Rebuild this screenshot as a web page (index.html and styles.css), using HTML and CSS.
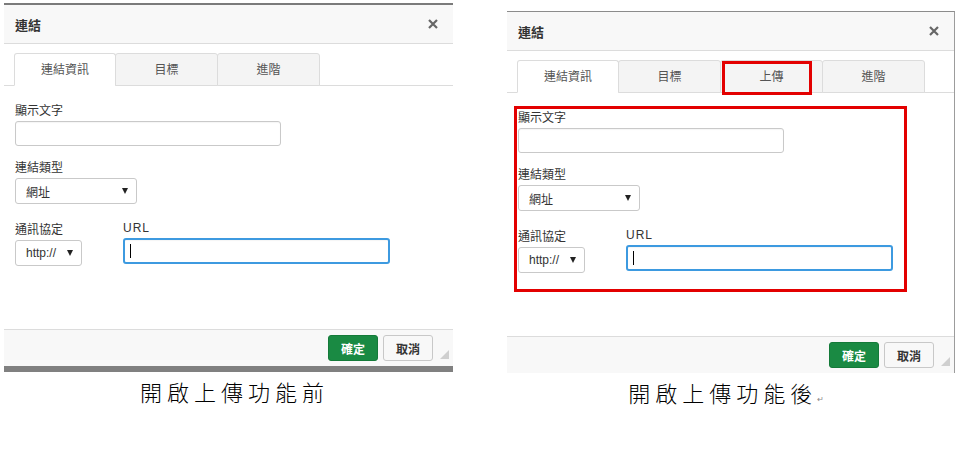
FILE: index.html
```html
<!DOCTYPE html>
<html lang="zh-Hant">
  <head>
    <meta charset="UTF-8" />
    <meta name="viewport" content="width=device-width, initial-scale=1.0" />
    <title>連結</title>
    <link rel="stylesheet" href="styles.css">
  </head>
  <body>
    <div class="page">
      <!-- before -->
      <div class="shot shot-before">
        <div class="dialog">
          <div class="dlg-head">
            <span class="dlg-title">連結</span>
            <svg class="close" width="10" height="10" viewBox="0 0 10 10"><path d="M1 1L9 9M9 1L1 9" stroke="#666" stroke-width="2.2"/></svg>
          </div>
          <div class="dlg-body">
            <div class="tabs">
              <div class="tab active">連結資訊</div>
              <div class="tab">目標</div>
              <div class="tab">進階</div>
            </div>
            <div class="panel">
              <div class="form-group">
                <label>顯示文字</label>
                <div class="text-field"></div>
              </div>
              <div class="form-group">
                <label>連結類型</label>
                <div class="select select-type"><span>網址</span><i class="arrow"></i></div>
              </div>
              <div class="form-row">
                <div class="proto-col">
                  <label>通訊協定</label>
                  <div class="select select-proto"><span>http://</span><i class="arrow"></i></div>
                </div>
                <div class="url-col">
                  <label class="latin">URL</label>
                  <div class="text-field url-field"><span class="caret"></span></div>
                </div>
              </div>
            </div>
          </div>
          <div class="dlg-foot">
            <button class="btn btn-ok">確定</button>
            <button class="btn btn-cancel">取消</button>
            <svg class="grip" width="9" height="9" viewBox="0 0 9 9"><path d="M9 0V9H0Z" fill="#cfcfcf"/></svg>
          </div>
        </div>
        <div class="caption caption-before">開啟上傳功能前</div>
      </div>

      <!-- after -->
      <div class="shot shot-after">
        <div class="dialog">
          <div class="dlg-head">
            <span class="dlg-title">連結</span>
            <svg class="close" width="10" height="10" viewBox="0 0 10 10"><path d="M1 1L9 9M9 1L1 9" stroke="#666" stroke-width="2.2"/></svg>
          </div>
          <div class="dlg-body">
            <div class="tabs">
              <div class="tab active">連結資訊</div>
              <div class="tab">目標</div>
              <div class="tab">上傳</div>
              <div class="tab">進階</div>
            </div>
            <div class="panel">
              <div class="form-group">
                <label>顯示文字</label>
                <div class="text-field"></div>
              </div>
              <div class="form-group">
                <label>連結類型</label>
                <div class="select select-type"><span>網址</span><i class="arrow"></i></div>
              </div>
              <div class="form-row">
                <div class="proto-col">
                  <label>通訊協定</label>
                  <div class="select select-proto"><span>http://</span><i class="arrow"></i></div>
                </div>
                <div class="url-col">
                  <label class="latin">URL</label>
                  <div class="text-field url-field"><span class="caret"></span></div>
                </div>
              </div>
            </div>
          </div>
          <div class="dlg-foot">
            <button class="btn btn-ok">確定</button>
            <button class="btn btn-cancel">取消</button>
            <svg class="grip" width="9" height="9" viewBox="0 0 9 9"><path d="M9 0V9H0Z" fill="#cfcfcf"/></svg>
          </div>
          <!-- red marks -->
          <div class="mark mark-tab"></div>
          <div class="mark mark-panel"></div>
        </div>
        <div class="caption caption-after">開啟上傳功能後<span class="ret">↵</span></div>
      </div>
    </div>
  </body>
</html>
```

FILE: styles.css
```css
* {
  box-sizing: border-box;
}
html,
body {
  margin: 0;
  padding: 0;
  background-color: #fff;
}
body {
  font-family: "Liberation Sans", Arial, "Noto Sans CJK TC", sans-serif;
  font-size: 12px;
  color: #333;
}
.page {
  display: flex;
  padding-left: 4px;
}
.shot {
  width: 449px;
}
.shot-before {
  padding-top: 3px;
}
.shot-after {
  width: 448px;
  margin-left: 54px;
  padding-top: 11px;
}
.dialog {
  position: relative;
  background: #fff;
}
.shot-before .dialog {
  border-top: 2px solid #7b7b7b;
  border-bottom: 6px solid #808080;
}
.shot-after .dialog {
  border-top: 1px solid #8c8c8c;
  border-right: 1px solid #9c9c9c;
}
.dlg-head {
  height: 39px;
  background: #f8f8f8;
  border-bottom: 1px solid #dcdcdc;
  display: flex;
  align-items: center;
  justify-content: space-between;
  padding: 0 15px 0 11px;
}
.dlg-title {
  font-size: 13px;
  font-weight: bold;
  color: #333;
}
.dlg-body {
  height: 285px;
  padding-top: 9px;
}
.tabs {
  display: flex;
  align-items: flex-end;
  padding-left: 10px;
  border-bottom: 1px solid #dcdcdc;
}
.tab {
  width: 102px;
  height: 33px;
  margin-bottom: -1px;
  border: 1px solid #dcdcdc;
  border-radius: 3px 3px 0 0;
  background: #f4f4f4;
  color: #555;
  text-align: center;
  line-height: 32px;
}
.tab + .tab {
  margin-left: -1px;
  width: 103px;
}
.tab.active {
  background: #fff;
  border-bottom-color: #fff;
}
.panel {
  padding: 17px 11px 0;
}
label {
  display: block;
  line-height: 16px;
  margin-bottom: 2px;
  color: #333;
}
label.latin {
  letter-spacing: 1px;
}
.form-group {
  margin-bottom: 14px;
}
.text-field {
  width: 266px;
  height: 25px;
  border: 1px solid #c9c9c9;
  border-radius: 3px;
  background: #fff;
  box-shadow: inset 0 1px 1px rgba(0, 0, 0, 0.04);
}
.form-group:first-child .text-field {
  margin-top: 1px;
}
.select {
  display: flex;
  align-items: center;
  justify-content: space-between;
  height: 26px;
  padding: 0 8px 0 10px;
  border: 1px solid #c9c9c9;
  border-radius: 3px;
  background: #fff;
  color: #333;
}
.select-type {
  width: 122px;
}
.select-proto {
  width: 67px;
}
.arrow {
  width: 0;
  height: 0;
  border-left: 3.5px solid transparent;
  border-right: 3.5px solid transparent;
  border-top: 6px solid #222;
}
.form-row {
  display: flex;
  padding-top: 4px;
}
.proto-col {
  width: 108px;
}
.url-col {
  margin-top: -2px;
}
.url-field {
  height: 26px;
  width: 267px;
  border: 2px solid #3d9ae0;
  display: flex;
  align-items: center;
  padding-left: 5px;
}
.caret {
  width: 1px;
  height: 14px;
  background: #000;
}
.dlg-foot {
  display: flex;
  justify-content: flex-end;
  align-items: flex-start;
  height: 37px;
  padding: 5px 4px 0 0;
  background: #f8f8f8;
  border-top: 1px solid #dcdcdc;
}
.btn {
  width: 50px;
  height: 26px;
  padding: 0;
  border-radius: 3px;
  font-family: inherit;
  font-size: 12px;
  font-weight: bold;
  cursor: pointer;
}
.btn-ok {
  background: #1a8a43;
  border: 1px solid #147a39;
  color: #fff;
}
.btn-cancel {
  margin-left: 5px;
  background: #f8f8f8;
  border: 1px solid #c8c8c8;
  color: #333;
}
.grip {
  margin: 15px 0 0 7px;
}
.mark {
  position: absolute;
  border: 3px solid #e30000;
}
.mark-tab {
  left: 215px;
  top: 49px;
  width: 90px;
  height: 34px;
}
.mark-panel {
  left: 7px;
  top: 94px;
  width: 393px;
  height: 186px;
}
.caption {
  margin-top: 4px;
  text-align: center;
  font-family: "DFKai-SB", "BiauKai", "AR PL UKai TW", "Noto Sans CJK TC", serif;
  font-size: 22px;
  font-weight: 300;
  line-height: 30px;
  letter-spacing: 5px;
  color: #000;
}
.caption-before {
  padding-left: 12px;
}
.caption-after {
  padding-right: 10px;
}
.ret {
  font-family: "DejaVu Sans", sans-serif;
  font-size: 8px;
  font-weight: normal;
  color: #888;
  letter-spacing: 0;
}
```
